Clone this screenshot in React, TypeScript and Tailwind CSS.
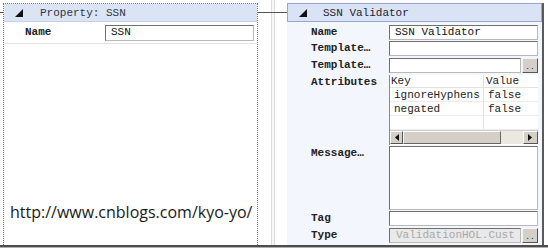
import React from "react";

const mono = { fontFamily: '"Liberation Mono", "DejaVu Sans Mono", monospace' };

function Corner() {
	return (
		<svg width="8" height="8" viewBox="0 0 8 8" className="shrink-0">
			<polygon points="8,0 8,8 0,8" fill="#111" />
		</svg>
	);
}

function Field({ value, muted, className = "" }: { value?: string; muted?: boolean; className?: string }) {
	return (
		<div
			className={`h-[15px] min-w-0 flex-1 overflow-hidden whitespace-nowrap border border-[#b8b8b8] border-t-[#707070] border-l-[#707070] pl-[5px] leading-[13px] ${
				muted ? "bg-[#e9e9e9] text-[#a8a8a8]" : "bg-white text-[#111]"
			} ${className}`}
		>
			{value}
		</div>
	);
}

function DotsButton() {
	return (
		<div className="ml-[1px] flex h-[15px] w-[16px] shrink-0 items-end justify-center border border-[#f4f4f4] border-r-[#555] border-b-[#555] bg-[#d4d0c8] pb-[1px] text-[8px] leading-[8px] text-[#222]">
			..
		</div>
	);
}

function Row({ label, children, className = "" }: { label: string; children: React.ReactNode; className?: string }) {
	return (
		<div className={`flex items-start ${className}`}>
			<div className="w-[78px] shrink-0 overflow-hidden whitespace-nowrap font-bold leading-[14px] text-[#222]">
				{label}
			</div>
			<div className="flex min-w-0 flex-1 items-start">{children}</div>
		</div>
	);
}

function ScrollBar() {
	return (
		<div className="flex h-[14px] border-t border-[#d0d0d0] bg-[#ebe8e2]">
			<div className="flex w-[13px] items-center justify-center border border-[#fafafa] border-r-[#555] border-b-[#555] bg-[#d4d0c8]">
				<svg width="5" height="7" viewBox="0 0 5 7">
					<polygon points="5,0 5,7 1,3.5" fill="#111" />
				</svg>
			</div>
			<div className="w-[98px] border border-[#fafafa] border-r-[#666] border-b-[#666] bg-[#d4d0c8]" />
			<div className="flex-1" />
			<div className="flex w-[15px] items-center justify-center border border-[#fafafa] border-r-[#555] border-b-[#555] bg-[#d4d0c8]">
				<svg width="5" height="7" viewBox="0 0 5 7">
					<polygon points="0,0 0,7 4,3.5" fill="#111" />
				</svg>
			</div>
		</div>
	);
}

function AttributesGrid() {
	const rows = [
		["ignoreHyphens", "false"],
		["negated", "false"],
		["", ""],
	];
	return (
		<div className="flex h-[70px] flex-1 flex-col border-l border-[#8a8a8a] bg-white">
			<div className="flex h-[13px] border-b border-[#e2e2e2] leading-[13px] text-[#222]">
				<div className="w-[94px] border-r border-[#e2e2e2] pl-[1px]">Key</div>
				<div className="pl-[2px]">Value</div>
			</div>
			{rows.map(([k, v], i) => (
				<div key={i} className="flex h-[14px] border-b border-[#ececec] leading-[14px] text-[#222]">
					<div className="w-[94px] border-r border-[#e2e2e2] pl-[4px]">{k}</div>
					<div className="pl-[4px]">{v}</div>
				</div>
			))}
			<ScrollBar />
		</div>
	);
}

function LeftPanel() {
	return (
		<section className="ml-[3px] h-[250px] w-[255px] shrink-0 border border-dotted border-[#777] bg-white">
			<div className="flex h-[18px] items-center gap-[17px] border-b border-[#c4d2ea] bg-[#dae4f5] pl-[11px]">
				<Corner />
				<span className="leading-[14px] text-[#334]">Property: SSN</span>
			</div>
			<div className="flex h-[22px] items-center border-b border-[#e4e4e4] pr-[3px]">
				<div className="w-[101px] shrink-0 pl-[21px] font-bold text-[#222]">Name</div>
				<Field value="SSN" className="h-[16px]" />
			</div>
		</section>
	);
}

function RightPanel() {
	return (
		<section className="flex h-[242px] w-[257px] shrink-0 flex-col border-r-2 border-[#5a5a5a] bg-[#f3f6fc]">
			<div className="flex h-[19px] shrink-0 items-center gap-[16px] border border-[#93a9d0] bg-[#d9e3f5] pl-[11px]">
				<Corner />
				<span className="leading-[14px] text-[#223]">SSN Validator</span>
			</div>
			<div className="flex flex-col pl-[24px] pr-[4px] pt-[3px]">
				<Row label="Name">
					<Field value="SSN Validator" />
				</Row>
				<Row label="Template…" className="mt-[1px]">
					<Field />
				</Row>
				<Row label="Template…" className="mt-[2px]">
					<Field />
					<DotsButton />
				</Row>
				<Row label="Attributes" className="mt-[2px]">
					<AttributesGrid />
				</Row>
				<Row label="Message…" className="mt-[1px]">
					<Field className="h-[64px]" />
				</Row>
				<Row label="Tag" className="mt-[1px]">
					<Field className="h-[14px]" />
				</Row>
				<Row label="Type" className="mt-[2px]">
					<Field value="ValidationHOL.Cust" muted className="pl-[6px]" />
					<DotsButton />
				</Row>
			</div>
		</section>
	);
}

export default function App() {
	return (
		<div className="relative h-[248px] w-[548px] overflow-hidden bg-white text-[11px]" style={mono}>
			<div className="flex h-[245px] items-start overflow-hidden pt-[3px]">
				<LeftPanel />
				<div className="flex h-[245px] w-[29px] shrink-0">
					<div className="w-[13px]" />
					<div className="mt-[-3px] h-[250px] w-[4px] border-x border-[#dcdcdc] bg-[#f7f7f7]" />
				</div>
				<RightPanel />
			</div>
			<div className="h-[2px] bg-[#4d4d4d]" />
			<div className="h-[1px] bg-[#b0b0b0]" />

			{/* connector lines between the two shapes */}
			<div className="absolute left-0 top-[12px] h-[1px] w-[3px] bg-[#555]" />
			<div className="absolute left-[258px] top-[12px] h-[1px] w-[29px] bg-[#555]" />

			<p
				className="absolute left-[10px] top-[202px] text-[16px] leading-[20px] text-[#1a1a1a]"
				style={{ fontFamily: '"Open Sans", "Noto Sans", sans-serif' }}
			>
				http://www.cnblogs.com/kyo-yo/
			</p>
		</div>
	);
}
